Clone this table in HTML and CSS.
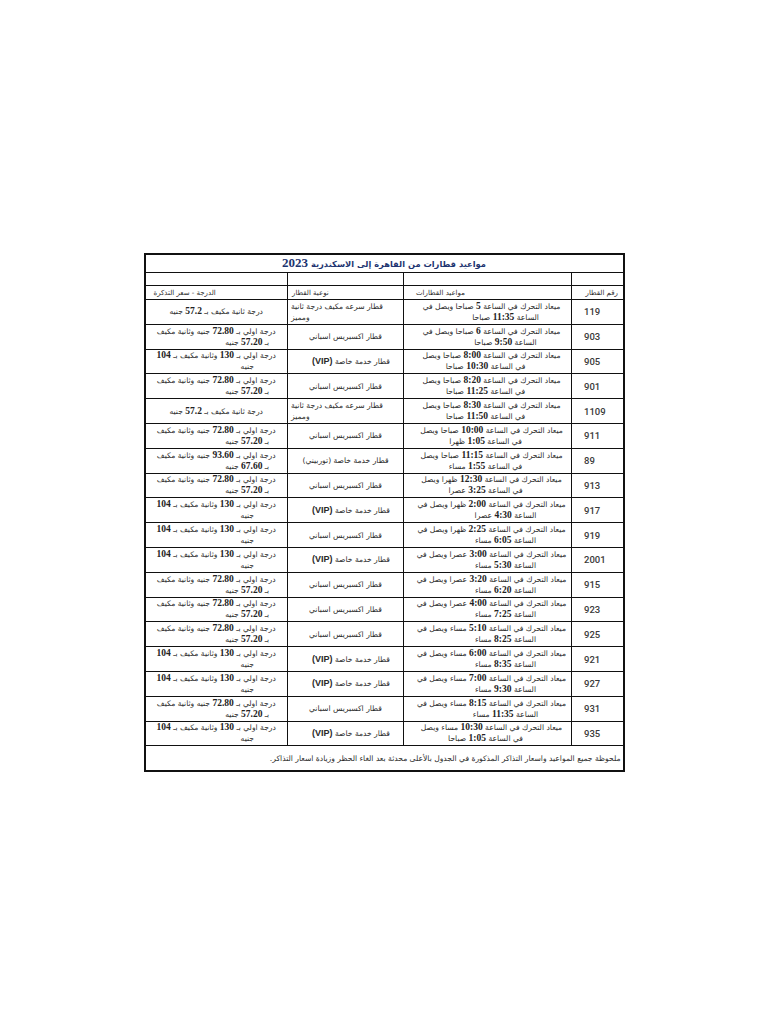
FILE: index.html
```html
<!DOCTYPE html>
<html lang="ar" dir="rtl">
<head>
<meta charset="utf-8">
<title>مواعيد قطارات من القاهرة إلى الاسكندرية 2023</title>
<link rel="stylesheet" href="styles.css">
</head>
<body>
<div class="page">
<table class="sched">
<colgroup>
<col class="c-num"><col class="c-time"><col class="c-type"><col class="c-price">
</colgroup>
<tr class="r-title"><td colspan="4">مواعيد قطارات من القاهرة إلى الاسكندرية <b class="yr">2023</b></td></tr>
<tr class="r-blank"><td></td><td></td><td></td><td></td></tr>
<tr class="r-head"><td class="h-num">رقم القطار</td><td class="h-time">مواعيد القطارات</td><td class="h-type">نوعية القطار</td><td class="h-price">الدرجة - سعر التذكرة</td></tr>
<tr><td class="num">119</td><td class="time"><span class="l1">ميعاد التحرك في الساعة <b>5</b> صباحا ويصل في</span><span class="l2a">الساعة <b>11:35</b> صباحا</span></td><td class="type two"><span>قطار سرعه مكيف درجة ثانية</span><span>ومميز</span></td><td class="price">درجة ثانية مكيف بـ <b>57.2</b> جنيه</td></tr>
<tr><td class="num">903</td><td class="time"><span class="l1">ميعاد التحرك في الساعة <b>6</b> صباحا ويصل في</span><span class="l2a">الساعة <b>9:50</b> صباحا</span></td><td class="type">قطار اكسبريس اسباني</td><td class="price"><span class="p1">درجة اولي بـ <b>72.80</b> جنيه وثانية مكيف</span><span class="p2">بـ <b>57.20</b> جنيه</span></td></tr>
<tr><td class="num">905</td><td class="time"><span class="l1">ميعاد التحرك في الساعة <b>8:00</b> صباحا ويصل</span><span class="l2b">في الساعة <b>10:30</b> صباحا</span></td><td class="type vipc">قطار خدمة خاصة <span class="vip">(VIP)</span></td><td class="price"><span class="p1">درجة اولي بـ <b>130</b> وثانية مكيف بـ <b>104</b></span><span class="p2">جنيه</span></td></tr>
<tr><td class="num">901</td><td class="time"><span class="l1">ميعاد التحرك في الساعة <b>8:20</b> صباحا ويصل</span><span class="l2b">في الساعة <b>11:25</b> صباحا</span></td><td class="type">قطار اكسبريس اسباني</td><td class="price"><span class="p1">درجة اولي بـ <b>72.80</b> جنيه وثانية مكيف</span><span class="p2">بـ <b>57.20</b> جنيه</span></td></tr>
<tr><td class="num">1109</td><td class="time"><span class="l1">ميعاد التحرك في الساعة <b>8:30</b> صباحا ويصل</span><span class="l2b">في الساعة <b>11:50</b> صباحا</span></td><td class="type two"><span>قطار سرعه مكيف درجة ثانية</span><span>ومميز</span></td><td class="price">درجة ثانية مكيف بـ <b>57.2</b> جنيه</td></tr>
<tr><td class="num">911</td><td class="time"><span class="l1">ميعاد التحرك في الساعة <b>10:00</b> صباحا ويصل</span><span class="l2b">في الساعة <b>1:05</b> ظهرا</span></td><td class="type">قطار اكسبريس اسباني</td><td class="price"><span class="p1">درجة اولي بـ <b>72.80</b> جنيه وثانية مكيف</span><span class="p2">بـ <b>57.20</b> جنيه</span></td></tr>
<tr><td class="num">89</td><td class="time"><span class="l1">ميعاد التحرك في الساعة <b>11:15</b> صباحا ويصل</span><span class="l2b">في الساعة <b>1:55</b> مساء</span></td><td class="type">قطار خدمة خاصة (توربيني)</td><td class="price"><span class="p1">درجة اولي بـ <b>93.60</b> جنيه وثانية مكيف</span><span class="p2">بـ <b>67.60</b> جنيه</span></td></tr>
<tr><td class="num">913</td><td class="time"><span class="l1">ميعاد التحرك في الساعة <b>12:30</b> ظهرا ويصل</span><span class="l2b">في الساعة <b>3:25</b> عصرا</span></td><td class="type">قطار اكسبريس اسباني</td><td class="price"><span class="p1">درجة اولي بـ <b>72.80</b> جنيه وثانية مكيف</span><span class="p2">بـ <b>57.20</b> جنيه</span></td></tr>
<tr><td class="num">917</td><td class="time"><span class="l1">ميعاد التحرك في الساعة <b>2:00</b> ظهرا ويصل في</span><span class="l2a">الساعة <b>4:30</b> عصرا</span></td><td class="type vipc">قطار خدمة خاصة <span class="vip">(VIP)</span></td><td class="price"><span class="p1">درجة اولي بـ <b>130</b> وثانية مكيف بـ <b>104</b></span><span class="p2">جنيه</span></td></tr>
<tr><td class="num">919</td><td class="time"><span class="l1">ميعاد التحرك في الساعة <b>2:25</b> ظهرا ويصل في</span><span class="l2a">الساعة <b>6:05</b> مساء</span></td><td class="type">قطار اكسبريس اسباني</td><td class="price"><span class="p1">درجة اولي بـ <b>130</b> وثانية مكيف بـ <b>104</b></span><span class="p2">جنيه</span></td></tr>
<tr><td class="num">2001</td><td class="time"><span class="l1">ميعاد التحرك في الساعة <b>3:00</b> عصرا ويصل في</span><span class="l2a">الساعة <b>5:30</b> مساء</span></td><td class="type vipc">قطار خدمة خاصة <span class="vip">(VIP)</span></td><td class="price"><span class="p1">درجة اولي بـ <b>130</b> وثانية مكيف بـ <b>104</b></span><span class="p2">جنيه</span></td></tr>
<tr><td class="num">915</td><td class="time"><span class="l1">ميعاد التحرك في الساعة <b>3:20</b> عصرا ويصل في</span><span class="l2a">الساعة <b>6:20</b> مساء</span></td><td class="type">قطار اكسبريس اسباني</td><td class="price"><span class="p1">درجة اولي بـ <b>72.80</b> جنيه وثانية مكيف</span><span class="p2">بـ <b>57.20</b> جنيه</span></td></tr>
<tr><td class="num">923</td><td class="time"><span class="l1">ميعاد التحرك في الساعة <b>4:00</b> عصرا ويصل في</span><span class="l2a">الساعة <b>7:25</b> مساء</span></td><td class="type">قطار اكسبريس اسباني</td><td class="price"><span class="p1">درجة اولي بـ <b>72.80</b> جنيه وثانية مكيف</span><span class="p2">بـ <b>57.20</b> جنيه</span></td></tr>
<tr><td class="num">925</td><td class="time"><span class="l1">ميعاد التحرك في الساعة <b>5:10</b> مساء ويصل في</span><span class="l2a">الساعة <b>8:25</b> مساء</span></td><td class="type">قطار اكسبريس اسباني</td><td class="price"><span class="p1">درجة اولي بـ <b>72.80</b> جنيه وثانية مكيف</span><span class="p2">بـ <b>57.20</b> جنيه</span></td></tr>
<tr><td class="num">921</td><td class="time"><span class="l1">ميعاد التحرك في الساعة <b>6:00</b> مساء ويصل في</span><span class="l2a">الساعة <b>8:35</b> مساء</span></td><td class="type vipc">قطار خدمة خاصة <span class="vip">(VIP)</span></td><td class="price"><span class="p1">درجة اولي بـ <b>130</b> وثانية مكيف بـ <b>104</b></span><span class="p2">جنيه</span></td></tr>
<tr><td class="num">927</td><td class="time"><span class="l1">ميعاد التحرك في الساعة <b>7:00</b> مساء ويصل في</span><span class="l2a">الساعة <b>9:30</b> مساء</span></td><td class="type vipc">قطار خدمة خاصة <span class="vip">(VIP)</span></td><td class="price"><span class="p1">درجة اولي بـ <b>130</b> وثانية مكيف بـ <b>104</b></span><span class="p2">جنيه</span></td></tr>
<tr><td class="num">931</td><td class="time"><span class="l1">ميعاد التحرك في الساعة <b>8:15</b> مساء ويصل في</span><span class="l2a">الساعة <b>11:35</b> مساء</span></td><td class="type">قطار اكسبريس اسباني</td><td class="price"><span class="p1">درجة اولي بـ <b>72.80</b> جنيه وثانية مكيف</span><span class="p2">بـ <b>57.20</b> جنيه</span></td></tr>
<tr><td class="num">935</td><td class="time"><span class="l1">ميعاد التحرك في الساعة <b>10:30</b> مساء ويصل</span><span class="l2b">في الساعة <b>1:05</b> صباحا</span></td><td class="type vipc">قطار خدمة خاصة <span class="vip">(VIP)</span></td><td class="price"><span class="p1">درجة اولي بـ <b>130</b> وثانية مكيف بـ <b>104</b></span><span class="p2">جنيه</span></td></tr>
<tr class="r-foot"><td colspan="4">ملحوظة جميع المواعيد واسعار التذاكر المذكورة في الجدول بالأعلى محدثة بعد الغاء الحظر وزيادة اسعار التذاكر.</td></tr>
</table>
</div>
</body>
</html>
```

FILE: styles.css
```css
html, body {
  margin: 0;
  padding: 0;
  background: #ffffff;
}
.page {
  padding-top: 253px;
  display: flex;
  justify-content: center;
}
.sched {
  width: 479px;
  table-layout: fixed;
  border-collapse: collapse;
  border: 2px solid #111;
  font-family: "DejaVu Sans", sans-serif;
  font-size: 7.6px;
  color: #2a2a2a;
  direction: rtl;
}
.c-num { width: 52px; }
.c-time { width: 168px; }
.c-type { width: 116px; }
.c-price { width: 143px; }
.sched td {
  border: 1px solid #111;
  padding: 0 3px;
  line-height: 11px;
  text-align: center;
  vertical-align: middle;
  overflow: hidden;
  white-space: nowrap;
}
.sched tr { height: 24.8px; }
.sched b {
  font-family: "Liberation Serif", serif;
  font-weight: bold;
  font-size: 9.5px;
  color: #222;
}
.time span, .price span, .type.two span {
  display: block;
}
.time .l1 { padding-left: 8px; }
.time .l2a { padding-left: 36px; }
.time .l2b { padding-right: 4px; }
.price .p2 { padding-left: 62px; }
.type.two { text-align: left; padding-left: 3px; }
.type.vipc { padding-left: 14px; }
.r-title { height: 17px !important; }
.r-title td {
  font-weight: bold;
  font-size: 8.3px;
  color: #1d3470;
  line-height: 15px;
}
.r-title .yr {
  font-size: 13px;
  color: #1d3470;
}
.r-blank { height: 13px !important; }
.r-head { height: 14px !important; }
.r-head td {
  text-align: left;
  line-height: 12px;
  font-size: 7px;
}
.h-num { padding-left: 12px !important; text-align: center !important; }
.h-time { padding-left: 12px !important; }
.h-type { padding-left: 4px !important; }
.h-price { padding-left: 8px !important; }
.num {
  font-family: Roboto, "Liberation Sans", sans-serif;
  font-weight: 500;
  font-size: 9.5px;
  color: #3a3a3a;
  text-align: left !important;
  padding-left: 12px !important;
}
.vip {
  font-family: "Liberation Sans", sans-serif;
  font-weight: bold;
  font-size: 9px;
}
.r-foot { height: 25px !important; }
.r-foot td {
  text-align: right;
  padding-right: 2px;
}
```
